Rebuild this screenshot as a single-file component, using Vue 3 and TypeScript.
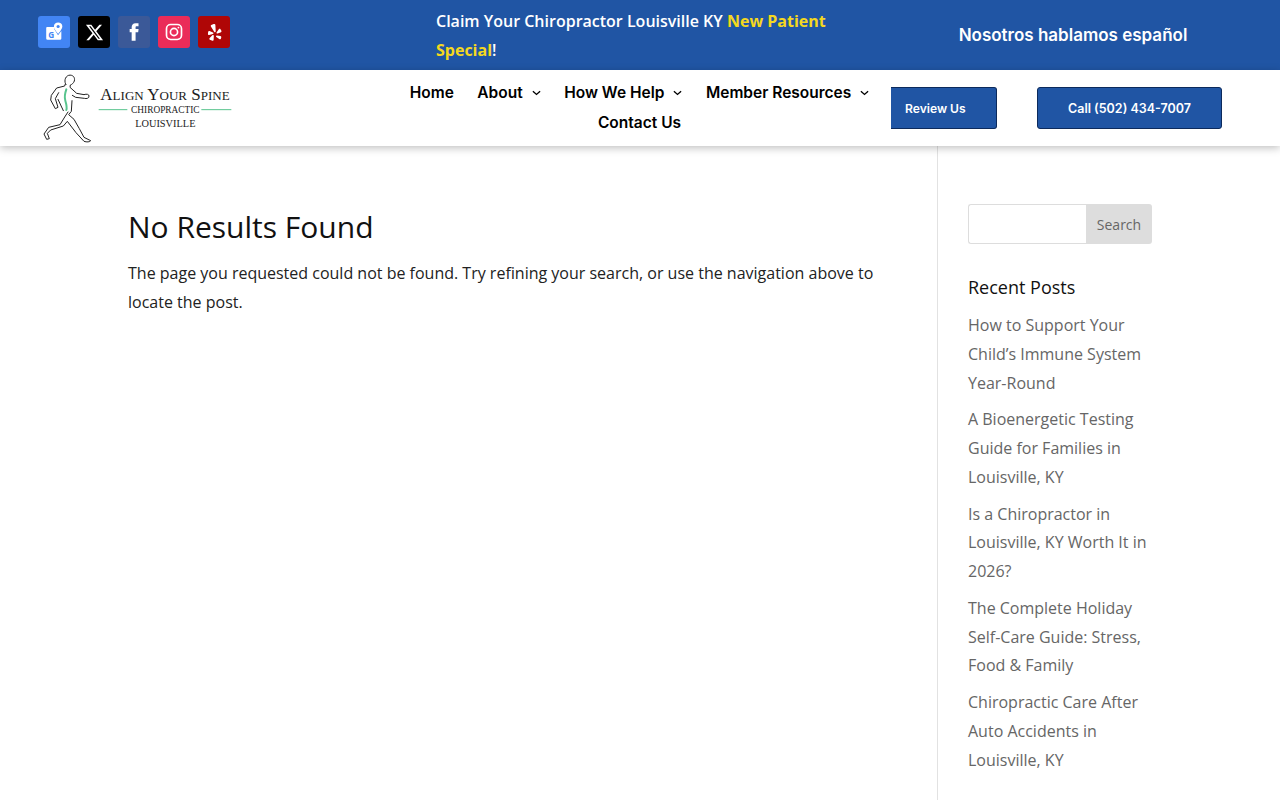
<script setup lang="ts">
const menu = [
  { label: 'Home', caret: false },
  { label: 'About', caret: true },
  { label: 'How We Help', caret: true },
  { label: 'Member Resources', caret: true },
  { label: 'Contact Us', caret: false },
];

const posts = [
  'How to Support Your Child’s Immune System Year-Round',
  'A Bioenergetic Testing Guide for Families in Louisville, KY',
  'Is a Chiropractor in Louisville, KY Worth It in 2026?',
  'The Complete Holiday Self-Care Guide: Stress, Food & Family',
  'Chiropractic Care After Auto Accidents in Louisville, KY',
];
</script>

<template>
  <div class="page">
    <header class="topbar">
      <div class="social">
        <a class="soc gmaps" href="#">
          <svg viewBox="0 0 24 24" width="22" height="22">
            <path d="M3.500 7.500a1 1 0 0 1 1-1H13l-.6 2.600 4 6.400 3.600-4.500v8a1.500 1.500 0 0 1-1.500 1.500H5a1.500 1.500 0 0 1-1.500-1.500z" fill="#fff" />
            <path d="M16.500 1.500a4.600 4.600 0 0 0-4.600 4.600c0 3 4.600 8 4.600 8s4.600-5 4.600-8a4.600 4.600 0 0 0-4.600-4.600z" fill="#fff" />
            <circle cx="16.500" cy="6" r="1.700" fill="#4285f4" />
            <text x="5.800" y="18.800" class="g">G</text>
          </svg>
        </a>
        <a class="soc x" href="#">
          <svg viewBox="0 0 24 24" width="19" height="19">
            <path fill="#fff" d="M18.200 2.200h3.300l-7.200 8.300 8.500 11.200h-6.600l-5.200-6.800-6 6.800H1.700l7.700-8.800-8.200-10.700h6.800l4.700 6.200zm-1.100 17.600h1.800L7.100 4.100h-2z" />
          </svg>
        </a>
        <a class="soc fb" href="#">
          <svg viewBox="0 0 24 24" width="20" height="20">
            <path fill="#fff" d="M13.900 8.300V6.400c0-.9.500-1.200 1.100-1.200h2.400V1.500h-3.300C10.500 1.500 9.200 3.800 9.200 6.200v2.100H6.800v4h2.400v10.200h4.700V12.300h3.100l.5-4z" />
          </svg>
        </a>
        <a class="soc ig" href="#">
          <svg viewBox="0 0 24 24" width="20" height="20" fill="none" stroke="#fff" stroke-width="2">
            <rect x="3" y="3" width="18" height="18" rx="5" />
            <circle cx="12" cy="12" r="4.300" />
            <circle cx="17.300" cy="6.700" r="1.100" fill="#fff" stroke="none" />
          </svg>
        </a>
        <a class="soc yelp" href="#">
          <svg viewBox="0 0 24 24" width="21" height="21" fill="#fff">
            <path d="M11 2.300c.9-.3 1.900.2 2 1.100l.4 7.300c0 1-1 1.400-1.600.6L7.900 5.200c-.4-.6-.2-1.400.5-1.700z" />
            <path d="M4.700 11.300c.1-.8.900-1.300 1.600-1l3.900 1.700c.9.400.8 1.500-.1 1.800l-4.200 1c-.7.200-1.400-.4-1.400-1.100z" />
            <path d="M6.600 20.200c-.6-.5-.7-1.400-.1-1.900l3-3.100c.7-.7 1.800-.2 1.700.8l-.2 4.300c0 .7-.7 1.200-1.400 1.100z" />
            <path d="M19.700 9.800c.5.600.4 1.500-.3 1.900l-3.800 1.400c-.9.300-1.700-.7-1.100-1.500l2.400-3.300c.4-.6 1.300-.7 1.800-.2z" />
            <path d="M19.300 19c-.4.700-1.300 1-1.900.5l-3.300-2.300c-.8-.6-.4-1.800.6-1.800l4 .6c.8.100 1.200.9 1 1.600z" />
          </svg>
        </a>
      </div>
      <p class="claim">Claim Your Chiropractor Louisville KY <strong>New Patient Special</strong>!</p>
      <p class="spanish">Nosotros hablamos español</p>
    </header>

    <nav class="navbar">
      <a class="logo" href="#">
        <svg viewBox="0 0 600 228" width="200" height="76">
          <g fill="none" stroke="#222" stroke-width="3" stroke-linecap="round" stroke-linejoin="round">
            <path d="M90 44c-6-8-4-24 8-28 12-3 20 6 17 17-2 6-8 11-12 12l-1 7 20 18 22 4c8-3 15-1 15 4 1 7-8 9-14 7l-26-3-10-6" />
            <path d="M88 42l-2 6-24 6-16 22-2 14 14 26 8-4-8-26 10-18" />
            <path d="M108 92l-2 32-8 10 16 14 16 28 14 26 20 10c-2 4-12 5-20 2l-24-26-26-34-12 14-38 12-10 10 6 16-8 2-8-16 14-20 34-8 16-26 8-12" />
            <path d="M66 88l16 34" />
          </g>
          <path d="M91 58c-5 14-6 24-3 34 3 10 6 20 3 28" fill="none" stroke="#58c48e" stroke-width="6" stroke-linecap="round" />
          <text x="193" y="90" class="l1">A<tspan class="sc">LIGN</tspan> Y<tspan class="sc">OUR</tspan> S<tspan class="sc">PINE</tspan></text>
          <path d="M188 119h86M496 119h90" stroke="#58c48e" stroke-width="3" />
          <text x="388" y="130" class="l2" text-anchor="middle">CHIROPRACTIC</text>
          <text x="388" y="172" class="l3" text-anchor="middle">LOUISVILLE</text>
        </svg>
      </a>
      <ul class="menu">
        <li v-for="item in menu" :key="item.label">
          <a href="#">{{ item.label }}</a>
          <svg v-if="item.caret" class="caret" viewBox="0 0 10 6" width="9" height="6">
            <path d="M1 1l4 3.600L9 1" fill="none" stroke="#000" stroke-width="1.500" />
          </svg>
        </li>
      </ul>
      <div class="actions">
        <a class="btn review" href="#">Review Us</a>
        <a class="btn call" href="#">Call (502) 434-7007</a>
      </div>
    </nav>

    <main class="content">
      <section class="results">
        <h1>No Results Found</h1>
        <p>The page you requested could not be found. Try refining your search, or use the navigation above to locate the post.</p>
      </section>
      <aside class="sidebar">
        <form class="search" @submit.prevent>
          <input type="text" aria-label="Search" />
          <button type="submit">Search</button>
        </form>
        <h2>Recent Posts</h2>
        <ul class="posts">
          <li v-for="post in posts" :key="post"><a href="#">{{ post }}</a></li>
        </ul>
      </aside>
    </main>
  </div>
</template>

<style>
html,
body {
  margin: 0;
  overflow: hidden;
  background: #fff;
}
</style>

<style scoped>
.page {
  height: 800px;
  overflow: hidden;
  font-family: 'Open Sans', 'Noto Sans', sans-serif;
  font-size: 16px;
  color: #222;
}

a {
  color: inherit;
  text-decoration: none;
}

.topbar {
  display: grid;
  grid-template-columns: 436px 400px 1fr;
  height: 70px;
  background: #2055a4;
  color: #fff;
}

.social {
  display: flex;
  gap: 8px;
  padding: 16px 0 0 38px;
}

.soc {
  display: flex;
  align-items: center;
  justify-content: center;
  width: 32px;
  height: 32px;
  border-radius: 3px;
}

.gmaps { background: #4285f4; }
.x { background: #000; }
.fb { background: #3b5998; }
.ig { background: #ea2c59; }
.yelp { background: #af0606; }

.g {
  font: 700 9px 'Open Sans', sans-serif;
  fill: #4285f4;
}

.claim {
  margin: 0;
  padding-top: 7px;
  font-weight: 600;
  line-height: 29px;
}

.claim strong {
  font-weight: 700;
  color: #f4d820;
}

.spanish {
  margin: 0;
  padding: 21px 0 0 30px;
  text-align: center;
  font-family: Inter, sans-serif;
  font-weight: 600;
  font-size: 17px;
  line-height: 28px;
}

.navbar {
  position: relative;
  display: grid;
  grid-template-columns: 389px 501px 1fr;
  height: 76px;
  background: #fff;
  box-shadow: 0 2px 8px rgba(0, 0, 0, 0.25);
}

.logo {
  padding-left: 36px;
}

.logo svg {
  display: block;
}

.l1 {
  font: 400 51px 'Liberation Serif', serif;
  fill: #1c1c1c;
}

.sc {
  font-size: 39px;
}

.l2 {
  font: 400 28px 'Liberation Serif', serif;
  fill: #1c1c1c;
}

.l3 {
  font: 400 31px 'Liberation Serif', serif;
  fill: #1c1c1c;
}

.menu {
  display: flex;
  flex-wrap: wrap;
  justify-content: center;
  align-content: flex-start;
  gap: 0 23.500px;
  margin: 0;
  padding: 8px 0 0;
  list-style: none;
  font-family: Inter, sans-serif;
  font-weight: 600;
  font-size: 15.500px;
  line-height: 30px;
  color: #000;
}

.menu li {
  display: flex;
  align-items: center;
}

.caret {
  margin-left: 9px;
}

.actions {
  display: flex;
  gap: 40px;
  padding: 17px 0 0 1px;
  font-family: Inter, sans-serif;
  font-weight: 600;
  font-size: 12.500px;
  color: #fff;
}

.btn {
  display: flex;
  align-items: center;
  justify-content: center;
  box-sizing: border-box;
  height: 42px;
  background: #2055a4;
  border: 1px solid #0c2a5c;
  border-radius: 3px;
}

.review {
  justify-content: flex-start;
  width: 106px;
  padding-left: 14px;
  border-left: 0;
  border-radius: 0 3px 3px 0;
  font-size: 12.100px;
}

.call {
  width: 185px;
}

.content {
  display: grid;
  grid-template-columns: 809px 1fr;
  height: 654px;
  padding-left: 128px;
}

.results h1 {
  margin: 0;
  padding-top: 60px;
  font-size: 30px;
  font-weight: 400;
  line-height: 42px;
  color: #111;
}

.results p {
  margin: 11px 0 0;
  width: 760px;
  font-size: 16px;
  line-height: 29px;
}

.sidebar {
  border-left: 1px solid #e2e2e2;
  padding: 58px 0 0 30px;
}

.search {
  display: flex;
  width: 184px;
  height: 40px;
}

.search input {
  box-sizing: border-box;
  width: 118px;
  height: 40px;
  padding: 0;
  border: 1px solid #ddd;
  border-right: 0;
  border-radius: 3px 0 0 3px;
  background: #fff;
}

.search button {
  width: 66px;
  height: 40px;
  padding: 0;
  border: 0;
  border-radius: 0 3px 3px 0;
  background: #ddd;
  font: 400 14px 'Open Sans', sans-serif;
  color: #666;
}

.sidebar h2 {
  margin: 27px 0 0;
  font-size: 18px;
  font-weight: 400;
  line-height: 32px;
  color: #111;
}

.posts {
  margin: 8px 0 0;
  padding: 0;
  width: 184px;
  list-style: none;
  color: #666;
  line-height: 28.800px;
}

.posts li {
  margin-bottom: 7.900px;
}
</style>
